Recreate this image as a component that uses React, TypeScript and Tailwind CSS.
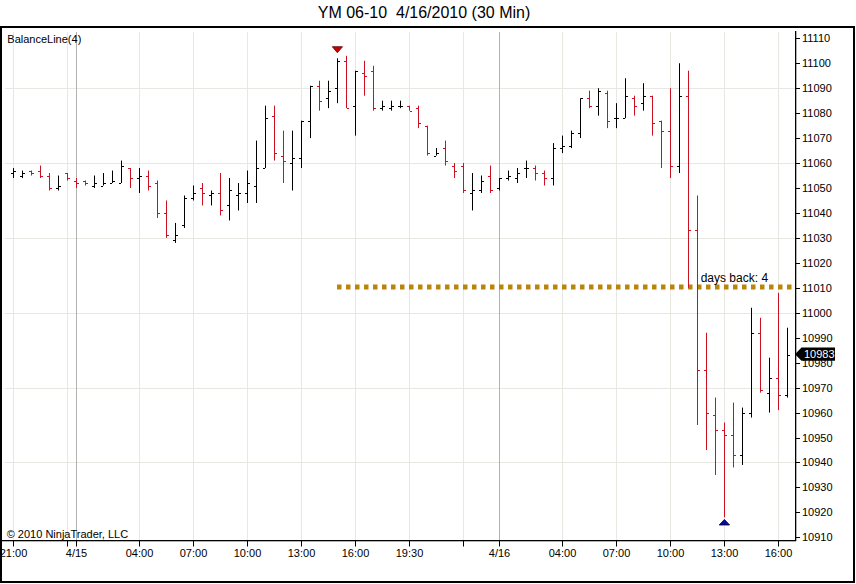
import React from 'react';

// [open, high, low, close] for each 30 min bar, oldest first
const BARS: [number, number, number, number][] = [
  [11056, 11058, 11054, 11057], [11055, 11057, 11054, 11056], [11057, 11057, 11055, 11056], [11057, 11059, 11054, 11055],
  [11055, 11056, 11049, 11050], [11050, 11055, 11049, 11051], [11056, 11056, 11053, 11054], [11053, 11054, 11050, 11052],
  [11053, 11053, 11051, 11052], [11051, 11055, 11050, 11052], [11051, 11056, 11051, 11052], [11052, 11057, 11052, 11053],
  [11052, 11061, 11052, 11059], [11058, 11058, 11050, 11054], [11054, 11058, 11048, 11055], [11055, 11057, 11049, 11051],
  [11052, 11053, 11038, 11040], [11040, 11045, 11030, 11031], [11029, 11036, 11028, 11031], [11035, 11047, 11034, 11046],
  [11046, 11051, 11045, 11048], [11050, 11052, 11043, 11048], [11047, 11049, 11043, 11048], [11048, 11056, 11039, 11041],
  [11043, 11054, 11037, 11049], [11047, 11052, 11041, 11048], [11048, 11057, 11044, 11052], [11051, 11069, 11044, 11058],
  [11058, 11083, 11058, 11078], [11079, 11083, 11061, 11064], [11063, 11073, 11052, 11061], [11060, 11073, 11049, 11062],
  [11062, 11077, 11058, 11077], [11077, 11091, 11070, 11091], [11091, 11093, 11081, 11085], [11086, 11093, 11082, 11089],
  [11090, 11102, 11084, 11101], [11101, 11103, 11082, 11082], [11083, 11097, 11071, 11097], [11096, 11101, 11087, 11095],
  [11097, 11099, 11081, 11082], [11082, 11085, 11081, 11083], [11082, 11085, 11081, 11083], [11083, 11085, 11082, 11083],
  [11083, 11083, 11081, 11081], [11082, 11083, 11074, 11076], [11075, 11075, 11063, 11064], [11063, 11066, 11063, 11064],
  [11066, 11069, 11059, 11061], [11059, 11060, 11054, 11057], [11059, 11060, 11048, 11049], [11048, 11056, 11041, 11049],
  [11049, 11055, 11048, 11053], [11055, 11059, 11048, 11049], [11050, 11054, 11049, 11054], [11054, 11057, 11053, 11055],
  [11054, 11058, 11052, 11056], [11058, 11061, 11054, 11058], [11058, 11059, 11053, 11056], [11056, 11057, 11051, 11054],
  [11054, 11068, 11051, 11066], [11066, 11071, 11064, 11067], [11067, 11073, 11066, 11072], [11072, 11086, 11070, 11086],
  [11086, 11089, 11082, 11083], [11083, 11090, 11079, 11089], [11088, 11089, 11074, 11077], [11078, 11084, 11074, 11078],
  [11078, 11094, 11078, 11087], [11086, 11087, 11079, 11083], [11084, 11092, 11081, 11087], [11087, 11087, 11071, 11076],
  [11077, 11077, 11058, 11073], [11073, 11090, 11054, 11059], [11059, 11100, 11056, 11087], [11087, 11097, 11010, 11033],
  [11033, 11047, 10955, 10977], [10977, 10992, 10945, 10960], [10959, 10966, 10935, 10953], [10953, 10956, 10918, 10951],
  [10951, 10964, 10938, 10943], [10943, 10962, 10939, 10960], [10960, 11002, 10958, 10992], [10992, 10998, 10968, 10969],
  [10968, 10982, 10960, 10974], [10974, 11008, 10961, 10967], [10967, 10994, 10966, 10983],
];

const GRID_BARS = [0, 6, 14, 20, 26, 32, 38, 44, 50, 61, 67, 73, 79, 85];
const DAY_BARS = [7, 54];
const TIME_LABELS: Record<number, string> = {
  0: '21:00', 7: '4/15', 14: '04:00', 20: '07:00', 26: '10:00', 32: '13:00', 38: '16:00', 44: '19:30',
  54: '4/16', 61: '04:00', 67: '07:00', 73: '10:00', 79: '13:00', 85: '16:00',
};
const GRID_PRICES = [11090, 11060, 11030, 11000, 10970, 10940];
const PRICE_LABELS = Array.from({ length: 21 }, (_, i) => 11110 - i * 10);

const FONT = '"Liberation Sans", Arial, sans-serif';
const UP = '#000000';
const DOWN = '#cc1122';
const AXIS_X = 795;
const AXIS_Y = 540;

const Y = (p: number) => 38.3 + (11110 - p) * 2.495;
const X = (k: number) => 13 + 9 * k;

function Chart() {
  const last = BARS[BARS.length - 1][3];
  const ly = Y(last) - 1;
  return (
    <svg width={851} height={553} viewBox="2 28 851 553" className="block" fontFamily={FONT}>
      {/* grid */}
      {GRID_PRICES.map((p) => (
        <rect key={p} x={5} y={Math.round(Y(p))} width={AXIS_X - 5} height={1} fill="#e9e7e2" />
      ))}
      {GRID_BARS.map((k) => (
        <rect key={k} x={X(k)} y={32} width={1} height={AXIS_Y - 32} fill="#e9e7e2" />
      ))}
      {DAY_BARS.map((k) => (
        <rect key={k} x={X(k)} y={32} width={1} height={AXIS_Y - 32} fill="#b2b2b2" />
      ))}

      {/* balance line */}
      <line x1={337} x2={AXIS_X} y1={287} y2={287} stroke="#b8860b" strokeWidth={5} strokeDasharray="4.5 4.5" />
      <text x={700.7} y={282.3} fontSize={12} fill="#000">days back: 4</text>

      {/* OHLC bars */}
      {BARS.map(([o, h, l, c], k) => {
        const x = X(k);
        const col = c >= o ? UP : DOWN;
        return (
          <g key={k} fill={col}>
            <rect x={x} y={Y(h)} width={1} height={Math.max(1, Y(l) - Y(h))} />
            <rect x={x - 2} y={Math.round(Y(o))} width={2} height={1} />
            <rect x={x + 1} y={Math.round(Y(c))} width={2} height={1} />
          </g>
        );
      })}

      {/* swing markers */}
      <polygon points="332.3,46.7 342.5,46.7 337.4,52.7" fill="#cc0000" stroke="#5a0000" strokeWidth={0.8} />
      <polygon points="719.2,525 729.6,525 724.4,519.4" fill="#0a0a9a" stroke="#000033" strokeWidth={0.8} />

      {/* axes */}
      <rect x={2} y={AXIS_Y} width={AXIS_X - 2 + 1} height={1.3} fill="#000" />
      <rect x={AXIS_X} y={31} width={1.3} height={AXIS_Y - 31 + 1} fill="#000" />
      {PRICE_LABELS.map((p) => (
        <g key={p}>
          <rect x={AXIS_X} y={Math.round(Y(p))} width={5} height={1} fill="#000" />
          <text x={802} y={Y(p) + 4} fontSize={11} fill="#000">{p}</text>
        </g>
      ))}
      {[...GRID_BARS, ...DAY_BARS].map((k) => (
        <rect key={k} x={X(k)} y={AXIS_Y} width={1} height={6.5} fill="#000" />
      ))}
      {Object.entries(TIME_LABELS).map(([k, t]) => (
        <text key={k} x={X(Number(k)) + 0.5} y={557.3} fontSize={11} textAnchor="middle" fill="#000">{t}</text>
      ))}

      {/* last price marker */}
      <polygon
        points={`${AXIS_X},${ly} ${AXIS_X + 6.5},${ly - 6.7} 835,${ly - 6.7} 835,${ly + 6.7} ${AXIS_X + 6.5},${ly + 6.7}`}
        fill="#000"
      />
      <text x={804} y={ly + 4} fontSize={11} fill="#fff">{last}</text>

      <text x={7.3} y={43.3} fontSize={11} fill="#000">BalanceLine(4)</text>
      <text x={6.7} y={537.7} fontSize={11} fill="#000">© 2010 NinjaTrader, LLC</text>
    </svg>
  );
}

export default function App() {
  return (
    <div className="w-[856px] h-[584px] bg-white flex flex-col" style={{ fontFamily: FONT }}>
      <div className="h-[26px] flex items-center justify-center pr-[8px] text-[16px] text-black whitespace-pre">
        YM 06-10  4/16/2010 (30 Min)
      </div>
      <div className="w-[855px] h-[557px] border-2 border-black overflow-hidden">
        <Chart />
      </div>
    </div>
  );
}
